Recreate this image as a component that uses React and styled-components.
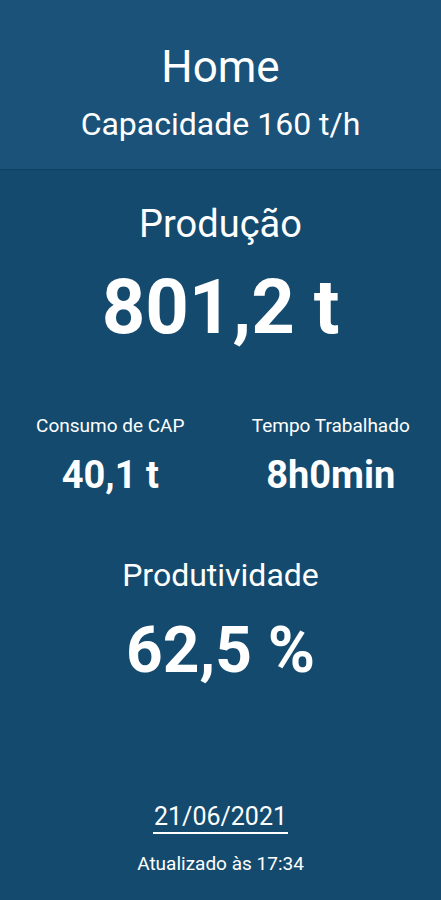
import React from 'react'
import styled, { createGlobalStyle } from 'styled-components'

const Global = createGlobalStyle`
  html, body {
    margin: 0;
    padding: 0;
    background: #144a6e;
  }
  body {
    font-family: Roboto, "Liberation Sans", sans-serif;
    color: #ffffff;
  }
`

const Screen = styled.div`
  min-height: 100vh;
  display: flex;
  flex-direction: column;
  background: #144a6e;
`

const Header = styled.header`
  background: #1a5279;
  box-shadow: 0 1px 1px rgba(0, 0, 0, 0.12);
  display: flex;
  flex-direction: column;
  align-items: center;
  padding: 45px 0 29px;
  gap: 19px;
`

const Title = styled.h1`
  margin: 0;
  font-size: 44px;
  line-height: 1;
  font-weight: 400;
`

const Subtitle = styled.div`
  font-size: 32px;
  line-height: 1;
`

const Content = styled.main`
  display: flex;
  flex-direction: column;
  align-items: center;
  padding-top: 36px;
`

const Label = styled.div`
  font-size: ${p => p.$size}px;
  line-height: 1;
  font-weight: 400;
  margin-top: ${p => p.$top || 0}px;
  white-space: nowrap;
`

const Value = styled.div`
  font-size: ${p => p.$size}px;
  line-height: 1;
  font-weight: 700;
  margin-top: ${p => p.$top}px;
  white-space: nowrap;
`

const Stats = styled.div`
  width: 100%;
  display: grid;
  grid-template-columns: 1fr 1fr;
  margin-top: 71px;
`

const Stat = styled.div`
  display: flex;
  flex-direction: column;
  align-items: center;
`

const DateText = styled.div`
  margin-top: 121px;
  font-size: 25px;
  line-height: 1;
  padding: 0 1px 3px;
  border-bottom: 2px solid #ffffff;
`

export default function App() {
  return (
    <Screen>
      <Global />
      <Header>
        <Title>Home</Title>
        <Subtitle>Capacidade 160 t/h</Subtitle>
      </Header>
      <Content>
        <Label $size={38}>Produção</Label>
        <Value $size={76} $top={26}>801,2 t</Value>
        <Stats>
          <Stat>
            <Label $size={19}>Consumo de CAP</Label>
            <Value $size={38} $top={21}>40,1 t</Value>
          </Stat>
          <Stat>
            <Label $size={19}>Tempo Trabalhado</Label>
            <Value $size={38} $top={21}>8h0min</Value>
          </Stat>
        </Stats>
        <Label $size={32} $top={65}>Produtividade</Label>
        <Value $size={64} $top={28}>62,5 %</Value>
        <DateText>21/06/2021</DateText>
        <Label $size={19} $top={20}>Atualizado às 17:34</Label>
      </Content>
    </Screen>
  )
}
